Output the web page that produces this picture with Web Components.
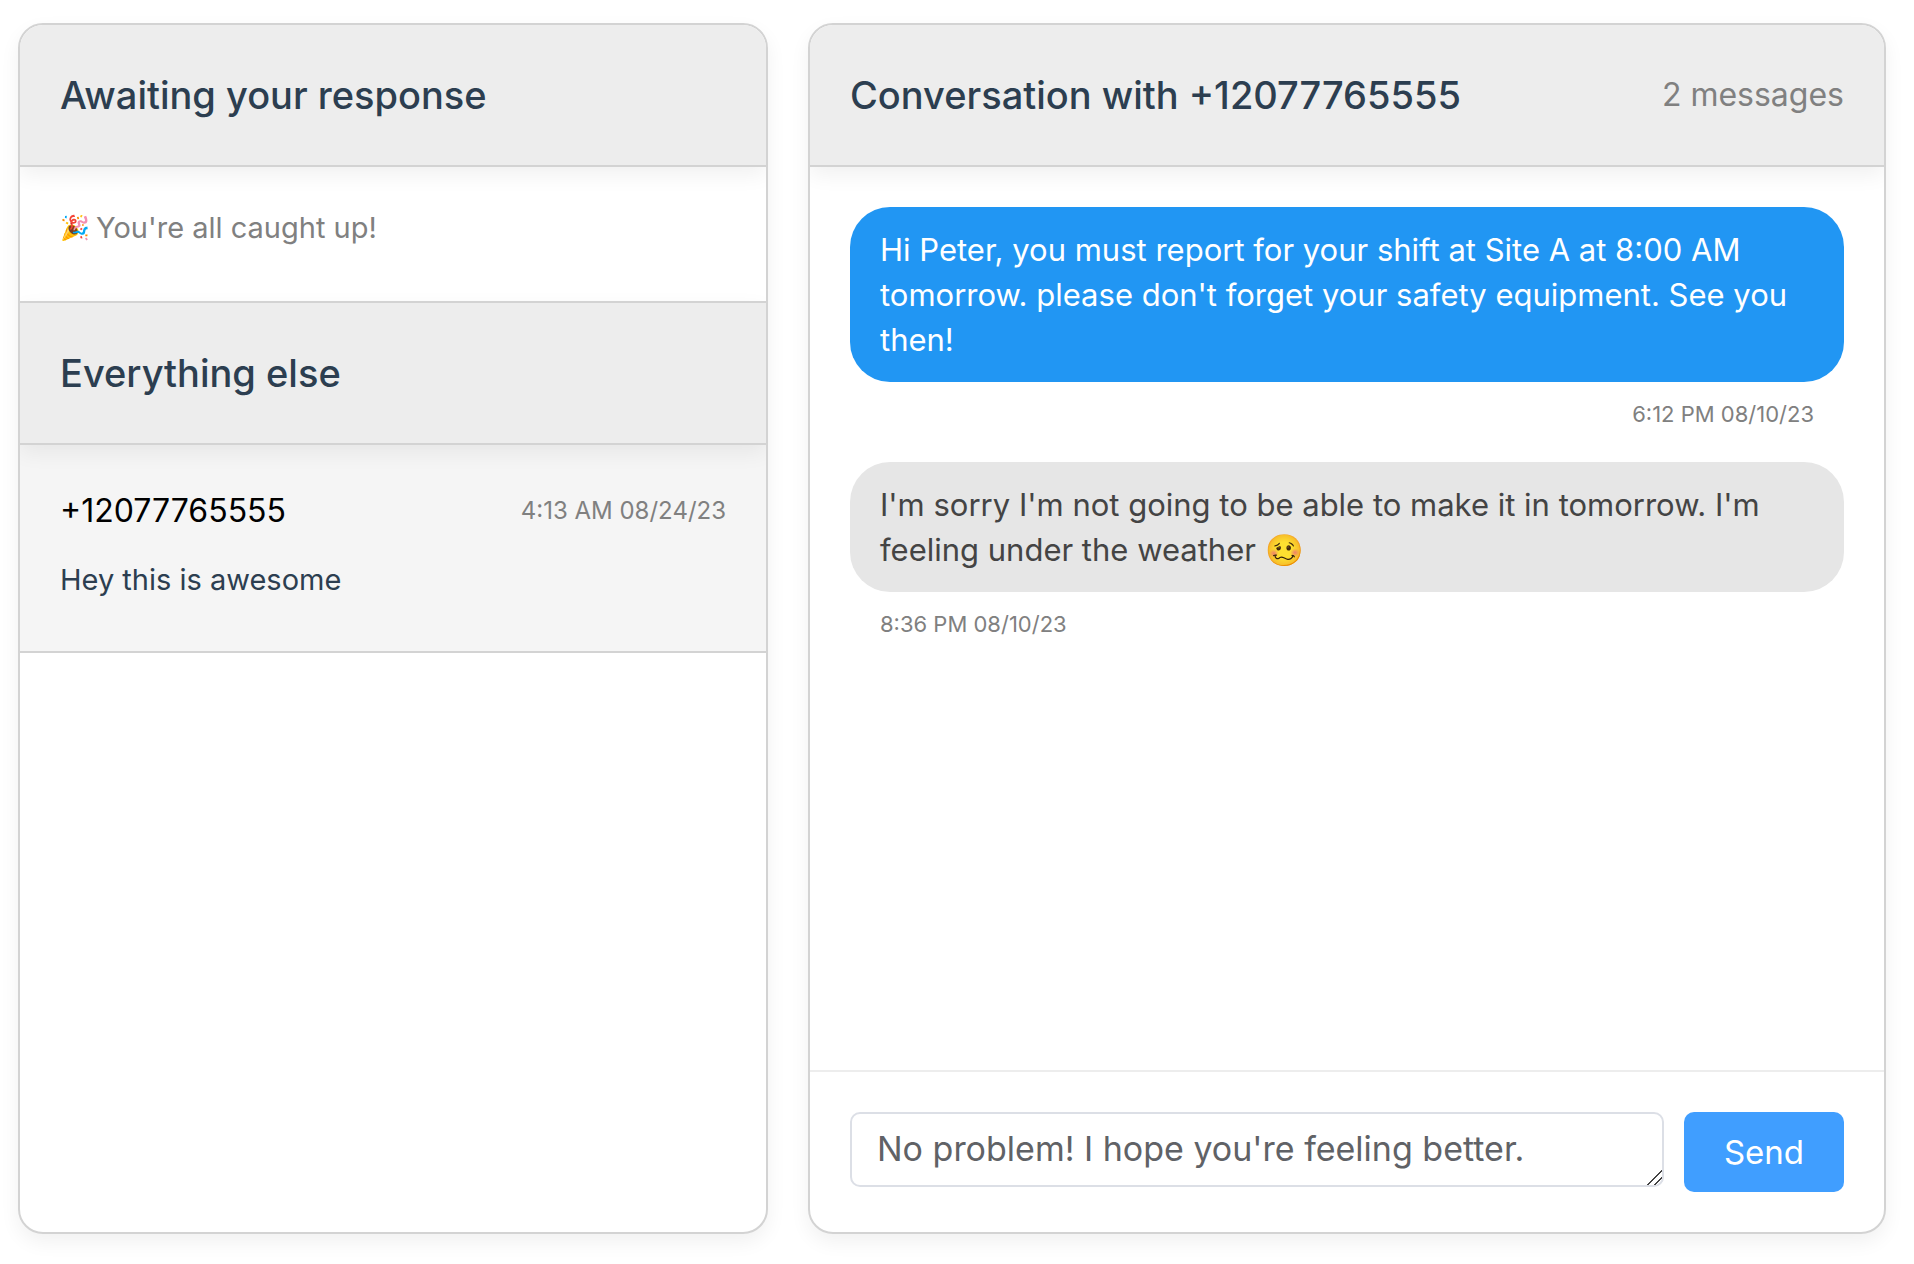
<!DOCTYPE html>
<html lang="en">
<head>
<meta charset="utf-8">
<meta name="viewport" content="width=device-width, initial-scale=1">
<title>Conversations</title>
<style>
  *, *::before, *::after { box-sizing: border-box; }
  body {
    margin: 0;
    background: #fff;
    color: #2c3e50;
    font-family: Inter, "Open Sans", sans-serif;
    --line: #d3d3d3;
    --muted: #808080;
    --shadow: 0 8px 20px rgba(0, 0, 0, .06);
  }
</style>
</head>
<body>
<message-app>
  <panel-card slot="inbox">
    <panel-header heading="Awaiting your response"></panel-header>
    <empty-note icon="🎉">You're all caught up!</empty-note>
    <panel-header heading="Everything else" divided></panel-header>
    <thread-item phone="+12077765555" time="4:13 AM 08/24/23">Hey this is awesome</thread-item>
  </panel-card>
  <panel-card slot="conversation">
    <panel-header heading="Conversation with +12077765555">2 messages</panel-header>
    <message-list>
      <chat-message kind="sent" time="6:12 PM 08/10/23">Hi Peter, you must report for your shift at Site A at 8:00 AM tomorrow. please don't forget your safety equipment. See you then!</chat-message>
      <chat-message kind="received" time="8:36 PM 08/10/23">I'm sorry I'm not going to be able to make it in tomorrow. I'm feeling under the weather 🥴</chat-message>
    </message-list>
    <reply-box value="No problem! I hope you're feeling better."></reply-box>
  </panel-card>
</message-app>
<script>
const reset = '*, *::before, *::after { box-sizing: border-box; }';

class ShadowElement extends HTMLElement {
  connectedCallback() {
    if (this.shadowRoot) return;
    const template = document.createElement('template');
    template.innerHTML = `<style>${reset}${this.styles}</style>${this.markup}`;
    this.attachShadow({ mode: 'open' }).append(template.content.cloneNode(true));
  }
  attr(name) { return this.getAttribute(name) ?? ''; }
}

customElements.define('message-app', class extends ShadowElement {
  styles = `
    :host { display: block; }
    main {
      display: grid;
      grid-template-columns: minmax(0, 375fr) minmax(0, 539fr);
      gap: 40px;
      height: 100vh;
      padding: 23px 28px 30px 18px;
    }
    ::slotted(*) { min-width: 0; min-height: 0; }`;
  get markup() {
    return `<main><slot name="inbox"></slot><slot name="conversation"></slot></main>`;
  }
});

customElements.define('panel-card', class extends ShadowElement {
  styles = `
    :host {
      display: flex;
      border: 2px solid var(--line);
      border-radius: 25px;
      background: #fff;
      box-shadow: var(--shadow);
    }
    section {
      flex: 1;
      min-width: 0;
      display: flex;
      flex-direction: column;
      overflow: hidden;
      border-radius: 23px;
    }`;
  get markup() { return `<section><slot></slot></section>`; }
});

customElements.define('panel-header', class extends ShadowElement {
  styles = `
    :host { display: block; position: relative; z-index: 1; }
    header {
      display: flex;
      align-items: center;
      justify-content: space-between;
      gap: 24px;
      padding: 40px;
      background: #ededed;
      border-bottom: 2px solid var(--line);
      box-shadow: var(--shadow);
    }
    :host([divided]) header { border-top: 2px solid var(--line); }
    h2 { margin: 0; font-size: 38px; font-weight: 500; line-height: 60px; }
    span { font-size: 32px; line-height: 48px; color: var(--muted); white-space: nowrap; }`;
  get markup() {
    return `<header><h2>${this.attr('heading')}</h2><span><slot></slot></span></header>`;
  }
});

customElements.define('empty-note', class extends ShadowElement {
  styles = `
    :host { display: block; padding: 40px 40px 52px; color: var(--muted); }
    p { display: flex; align-items: center; gap: 6px; margin: 0; font-size: 29px; line-height: 42px; }
    span { font-size: 24px; }`;
  get markup() {
    return `<p><span>${this.attr('icon')}</span><slot></slot></p>`;
  }
});

customElements.define('thread-item', class extends ShadowElement {
  styles = `
    :host { display: block; }
    article {
      display: flex;
      flex-direction: column;
      gap: 24px;
      padding: 42px 40px 50px;
      background: #f5f5f5;
      border-bottom: 2px solid var(--line);
    }
    div { display: flex; align-items: center; justify-content: space-between; gap: 24px; }
    h3 { margin: 0; font-size: 32px; font-weight: 400; line-height: 48px; color: #000; }
    time { font-size: 24px; line-height: 36px; color: var(--muted); }
    p { margin: 0; font-size: 29px; line-height: 42px; }`;
  get markup() {
    return `<article>
      <div><h3>${this.attr('phone')}</h3><time>${this.attr('time')}</time></div>
      <p><slot></slot></p>
    </article>`;
  }
});

customElements.define('message-list', class extends ShadowElement {
  styles = `
    :host { display: block; flex: 1; min-height: 0; overflow-y: auto; }
    div { display: flex; flex-direction: column; gap: 32px; padding: 40px; }`;
  get markup() { return `<div><slot></slot></div>`; }
});

customElements.define('chat-message', class extends ShadowElement {
  styles = `
    :host { display: flex; flex-direction: column; gap: 16px; }
    p { margin: 0; padding: 20px 30px; border-radius: 40px; font-size: 31px; line-height: 45px; }
    time { padding: 0 30px; font-size: 22px; line-height: 32px; color: var(--muted); }
    :host([kind=sent]) p { background: #2196f3; color: #fff; }
    :host([kind=sent]) time { text-align: right; }
    :host([kind=received]) p { background: #e6e6e6; color: #444; }`;
  get markup() {
    return `<p><slot></slot></p><time>${this.attr('time')}</time>`;
  }
});

customElements.define('reply-box', class extends ShadowElement {
  styles = `
    :host { display: block; }
    form {
      display: flex;
      align-items: flex-start;
      gap: 20px;
      padding: 40px;
      border-top: 2px solid #ededed;
    }
    textarea {
      flex: 1;
      min-width: 0;
      height: 75px;
      padding: 9px 25px;
      border: 2px solid #dcdfe6;
      border-radius: 10px;
      background: #fff;
      color: #606266;
      font: 400 34px/51px Inter, "Open Sans", sans-serif;
      resize: vertical;
      overflow: auto;
    }
    textarea::-webkit-scrollbar { width: 15px; }
    textarea::-webkit-resizer {
      background: linear-gradient(135deg, transparent 48%, #444 48% 54%, transparent 54% 73%, #444 73% 79%, transparent 79%);
    }
    button {
      height: 80px;
      padding: 0 40px;
      border: 0;
      border-radius: 10px;
      background: #409eff;
      color: #fff;
      font: 400 33px/48px Inter, "Open Sans", sans-serif;
    }`;
  get markup() {
    return `<form>
      <textarea rows="1" aria-label="Reply">${this.attr('value')}</textarea>
      <button type="button">Send</button>
    </form>`;
  }
});
</script>
</body>
</html>
